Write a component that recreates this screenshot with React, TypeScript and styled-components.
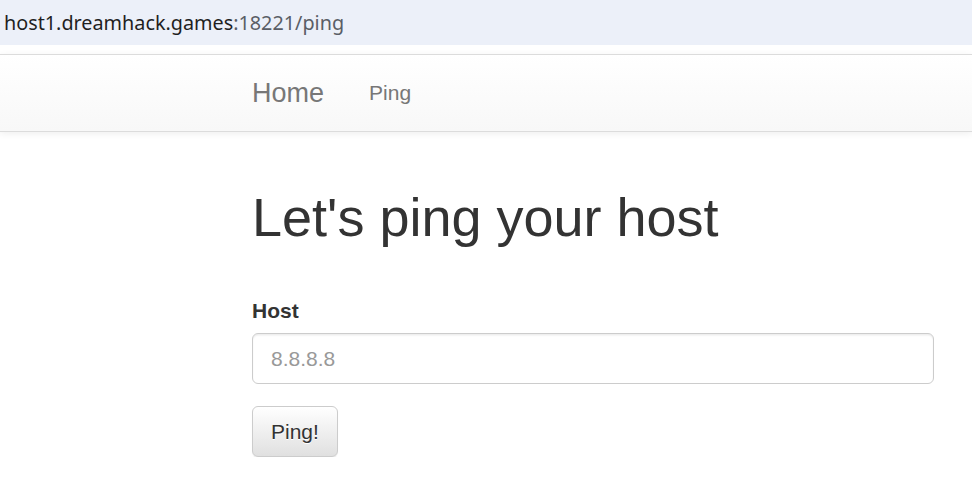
import React from "react";
import styled, { createGlobalStyle } from "styled-components";

const Global = createGlobalStyle`
  html, body { margin: 0; padding: 0; background: #fff; }
  body { font-family: "Liberation Sans", Arial, sans-serif; color: #333; }
  * { box-sizing: border-box; }
`;

const UrlBar = styled.div`
  height: 45px;
  background: #ecf0f9;
  display: flex;
  align-items: center;
  padding-left: 4px;
  font-family: "Noto Sans", "Open Sans", sans-serif;
  font-size: 19.8px;
  color: #1f1f1f;
`;

const UrlHost = styled.span`
  color: #1f1f1f;
`;

const UrlRest = styled.span`
  color: #5a5e66;
`;

const Spacer = styled.div`
  height: 9px;
  background: #fff;
`;

const Navbar = styled.nav`
  height: 78px;
  background: linear-gradient(to bottom, #ffffff 0%, #f8f8f8 100%);
  border-top: 1.5px solid #dcdcdc;
  border-bottom: 1.5px solid #dcdcdc;
  box-shadow: 0 1.5px 7.5px rgba(0, 0, 0, 0.075);
  display: flex;
  align-items: center;
  padding-left: 252px;
`;

const Brand = styled.a`
  font-size: 27px;
  color: #777;
  text-decoration: none;
  padding-right: 22.5px;
  line-height: 30px;
`;

const NavLink = styled.a`
  font-size: 21px;
  color: #777;
  text-decoration: none;
  padding-left: 22.5px;
  line-height: 30px;
`;

const Container = styled.main`
  padding-left: 252px;
  padding-right: 38px;
  display: flex;
  flex-direction: column;
`;

const Title = styled.h1`
  font-size: 54px;
  font-weight: 500;
  line-height: 59.4px;
  margin: 56px 0 0;
  color: #333;
`;

const Label = styled.label`
  font-size: 21px;
  font-weight: bold;
  line-height: 30px;
  margin-top: 49px;
  color: #333;
`;

const Input = styled.input`
  height: 51px;
  width: 682px;
  margin-top: 7px;
  border: 1px solid #ccc;
  border-radius: 6px;
  padding: 0 18px;
  font-family: "Liberation Sans", Arial, sans-serif;
  font-size: 21px;
  color: #555;
  box-shadow: inset 0 1.5px 1.5px rgba(0, 0, 0, 0.075);
  outline: none;
  &::placeholder { color: #999; }
`;

const Button = styled.button`
  align-self: flex-start;
  margin-top: 22px;
  height: 51px;
  padding: 0 18px;
  font-family: "Liberation Sans", Arial, sans-serif;
  font-size: 21px;
  color: #333;
  background: linear-gradient(to bottom, #ffffff 0%, #e0e0e0 100%);
  border: 1px solid #ccc;
  border-radius: 6px;
  text-shadow: 0 1px 0 #fff;
  box-shadow: inset 0 1px 0 rgba(255,255,255,.15), 0 1px 1px rgba(0,0,0,.075);
  cursor: pointer;
`;

export default function App() {
  return (
    <>
      <Global />
      <UrlBar>
        <UrlHost>host1.dreamhack.games</UrlHost>
        <UrlRest>:18221/ping</UrlRest>
      </UrlBar>
      <Spacer />
      <Navbar>
        <Brand href="#">Home</Brand>
        <NavLink href="#">Ping</NavLink>
      </Navbar>
      <Container>
        <Title>Let's ping your host</Title>
        <Label htmlFor="host">Host</Label>
        <Input id="host" placeholder="8.8.8.8" />
        <Button>Ping!</Button>
      </Container>
    </>
  );
}
